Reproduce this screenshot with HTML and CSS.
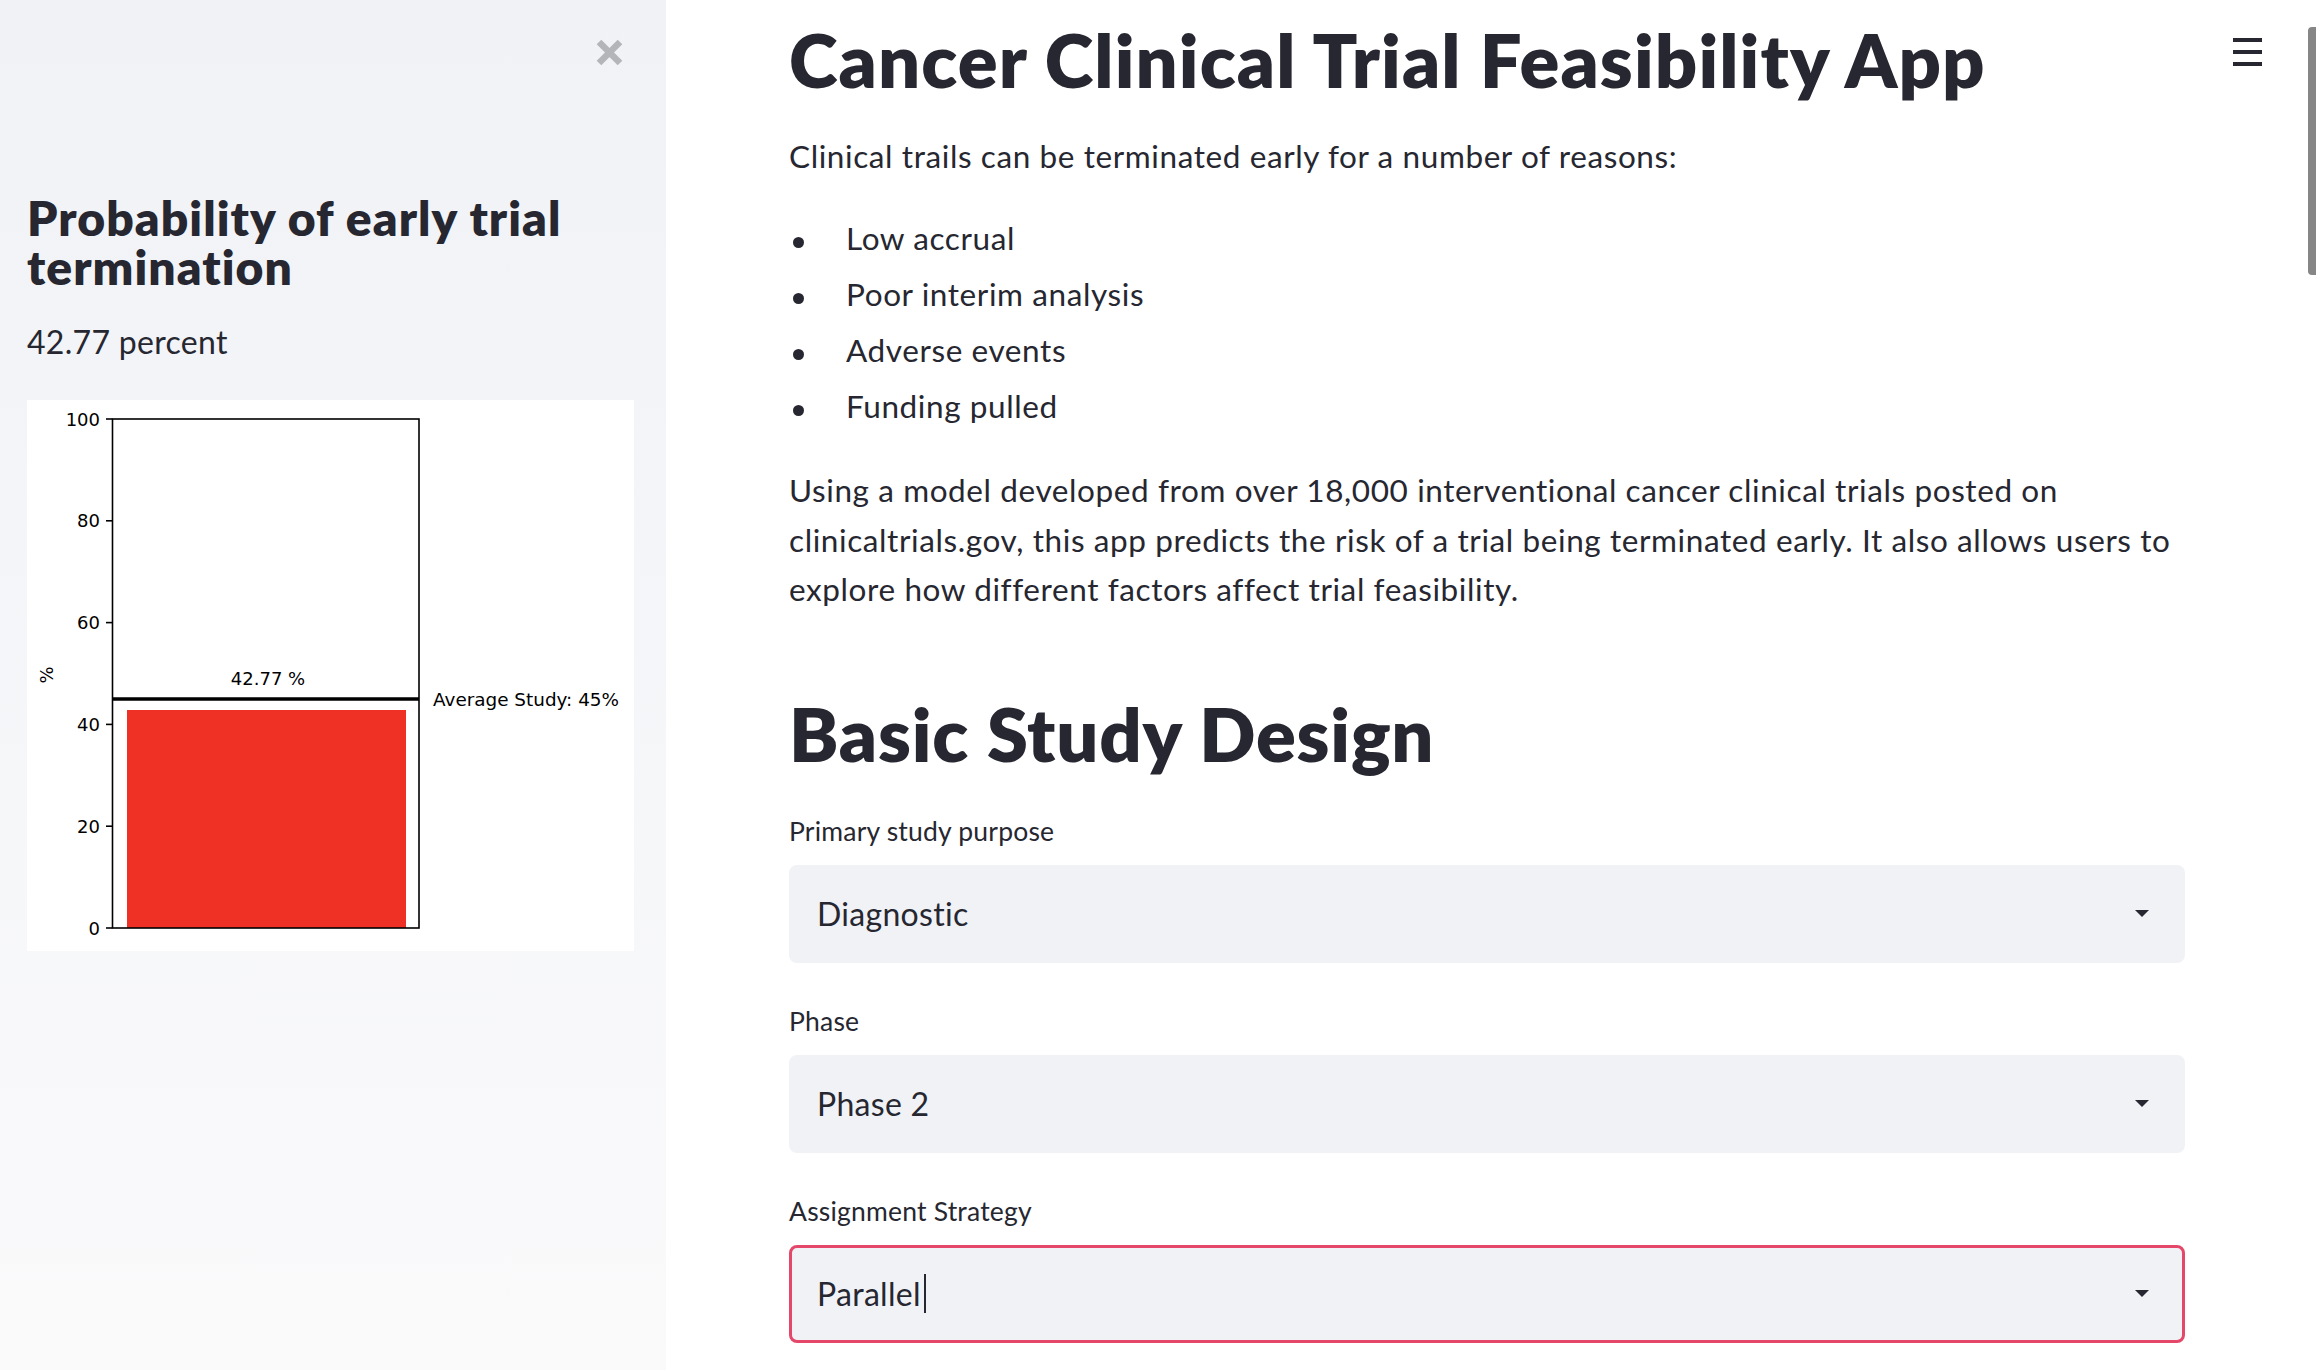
FILE: index.html
```html
<!DOCTYPE html>
<html lang="en">
<head>
<meta charset="utf-8">
<title>Cancer Clinical Trial Feasibility App</title>
<link rel="stylesheet" href="styles.css">
</head>
<body>
<div class="app">
  <aside class="sidebar">
    <div class="sidebar-top">
      <button class="close-btn" aria-label="Close sidebar">
        <svg viewBox="0 0 27 27" width="27" height="27"><path d="M3 3 L24 24 M24 3 L3 24" stroke="#b4b5b9" stroke-width="6.5" fill="none"/></svg>
      </button>
    </div>
    <h2 class="sb-title">Probability of early trial termination</h2>
    <p class="sb-value">42.77 percent</p>
    <div class="chart">
      <svg class="chart-svg" width="607" height="551" viewBox="0 0 607 551">
        <rect x="100" y="310" width="279" height="218" fill="#ee3124"/>
        <rect x="85.5" y="19" width="306.5" height="509" fill="none" stroke="#000" stroke-width="1.6"/>
        <line x1="85.5" y1="299" x2="392" y2="299" stroke="#000" stroke-width="3.4"/>
        <g stroke="#000" stroke-width="1.6">
          <line x1="79" y1="19" x2="85.5" y2="19"/>
          <line x1="79" y1="120.8" x2="85.5" y2="120.8"/>
          <line x1="79" y1="222.6" x2="85.5" y2="222.6"/>
          <line x1="79" y1="324.4" x2="85.5" y2="324.4"/>
          <line x1="79" y1="426.2" x2="85.5" y2="426.2"/>
          <line x1="79" y1="528" x2="85.5" y2="528"/>
        </g>
        <g class="tick-labels" text-anchor="end">
          <text x="73" y="25.5">100</text>
          <text x="73" y="127.3">80</text>
          <text x="73" y="229.1">60</text>
          <text x="73" y="330.9">40</text>
          <text x="73" y="432.7">20</text>
          <text x="73" y="534.5">0</text>
        </g>
        <text class="chart-text" x="241" y="285" text-anchor="middle">42.77 %</text>
        <text class="chart-text wide" x="406" y="306">Average Study: 45%</text>
        <text class="chart-text" x="26" y="275" text-anchor="middle" transform="rotate(-90 26 275)">%</text>
      </svg>
    </div>
  </aside>
  <main class="main">
    <div class="block">
      <h1 class="title">Cancer Clinical Trial Feasibility App</h1>
      <p class="text intro">Clinical trails can be terminated early for a number of reasons:</p>
      <ul class="reasons">
        <li>Low accrual</li>
        <li>Poor interim analysis</li>
        <li>Adverse events</li>
        <li>Funding pulled</li>
      </ul>
      <p class="text desc">Using a model developed from over 18,000 interventional cancer clinical trials posted on clinicaltrials.gov, this app predicts the risk of a trial being terminated early. It also allows users to explore how different factors affect trial feasibility.</p>
      <h1 class="title section">Basic Study Design</h1>
      <div class="field">
        <label class="field-label">Primary study purpose</label>
        <div class="select"><span class="select-value">Diagnostic</span><span class="arrow"></span></div>
      </div>
      <div class="field">
        <label class="field-label">Phase</label>
        <div class="select"><span class="select-value">Phase 2</span><span class="arrow"></span></div>
      </div>
      <div class="field">
        <label class="field-label">Assignment Strategy</label>
        <div class="select focused"><span class="select-value">Parallel<span class="caret"></span></span><span class="arrow"></span></div>
      </div>
    </div>
  </main>
</div>
<button class="menu-btn" aria-label="Menu"><span></span><span></span><span></span></button>
<div class="scroll-thumb"></div>
</body>
</html>
```
FILE: styles.css
```css
html, body {
  margin: 0;
  padding: 0;
}
body {
  width: 2316px;
  height: 1370px;
  overflow: hidden;
  position: relative;
  background: #ffffff;
  color: #262730;
  font-family: Lato, "Noto Sans", sans-serif;
}
.app {
  display: flex;
  height: 1370px;
}
.sidebar {
  width: 666px;
  flex: none;
  box-sizing: border-box;
  padding: 39px 32px 0 27px;
  background: linear-gradient(180deg, #f0f2f6 0%, #fafafb 100%);
}
.sidebar-top {
  display: flex;
  justify-content: flex-end;
  height: 27px;
  padding-right: 11px;
}
.close-btn {
  width: 27px;
  height: 27px;
  padding: 0;
  border: 0;
  background: none;
  display: block;
}
.close-btn svg { display: block; }
.sb-title {
  margin: 126.7px 0 0;
  font-size: 48px;
  line-height: 49px;
  font-weight: 800;
  letter-spacing: 1.05px;
}
.sb-value {
  margin: 26.5px 0 0;
  font-size: 32px;
  line-height: 49.6px;
  letter-spacing: 0.3px;
}
.chart {
  margin-top: 33px;
  height: 551px;
  background: #ffffff;
}
.chart-svg { display: block; }
.chart-svg text {
  font-family: "DejaVu Sans", sans-serif;
  font-size: 18px;
  fill: #000;
}
.chart-svg text.wide { font-size: 18.4px; }
.main {
  flex: 1;
  box-sizing: border-box;
  padding: 16.5px 0 0 123px;
}
.block {
  width: 1396px;
}
.title {
  margin: 0;
  font-size: 74px;
  line-height: 85px;
  font-weight: 800;
  letter-spacing: 1.1px;
}
.title.section { letter-spacing: 0.8px; }
.text {
  font-size: 31.5px;
  line-height: 49.6px;
  letter-spacing: 0.6px;
  margin: 0;
}
.intro { margin-top: 30px; }
.reasons {
  list-style: none;
  margin: 29.2px 0 0;
  padding: 0;
  font-size: 31.5px;
  line-height: 56px;
  letter-spacing: 0.6px;
}
.reasons li::before {
  content: "";
  display: inline-block;
  width: 11px;
  height: 11px;
  border-radius: 50%;
  background: #262730;
  vertical-align: middle;
  margin: 0 42px 0 4px;
}
.desc { margin-top: 31.7px; }
.section { margin-top: 76.1px; }
.field { margin-bottom: 40.5px; }
.field:first-of-type { margin-top: 37.3px; }
.field-label {
  display: block;
  font-size: 26.5px;
  line-height: 36px;
  letter-spacing: 0.2px;
  margin-bottom: 16px;
}
.select {
  height: 97.5px;
  box-sizing: border-box;
  border: 3px solid #f0f2f6;
  border-radius: 8px;
  background: #f0f2f6;
  display: flex;
  align-items: center;
  justify-content: space-between;
  padding: 0 33px 0 25px;
}
.select.focused { border-color: #e4476a; }
.select-value {
  font-size: 32px;
  line-height: 1.2;
  letter-spacing: 0.3px;
  display: flex;
  align-items: center;
}
.caret {
  display: inline-block;
  width: 2px;
  height: 39px;
  background: #262730;
  margin-left: 3px;
}
.arrow {
  width: 0;
  height: 0;
  border-left: 7px solid transparent;
  border-right: 7px solid transparent;
  border-top: 7px solid #262730;
}
.menu-btn {
  position: absolute;
  top: 38px;
  right: 54px;
  width: 29px;
  height: 28px;
  padding: 0;
  border: 0;
  background: none;
  display: flex;
  flex-direction: column;
  justify-content: space-between;
}
.menu-btn span {
  display: block;
  width: 29px;
  height: 4px;
  background: #262730;
}
.scroll-thumb {
  position: absolute;
  top: 27px;
  right: 0;
  width: 8px;
  height: 248px;
  border-radius: 4px 0 0 4px;
  background: #868686;
}
```
